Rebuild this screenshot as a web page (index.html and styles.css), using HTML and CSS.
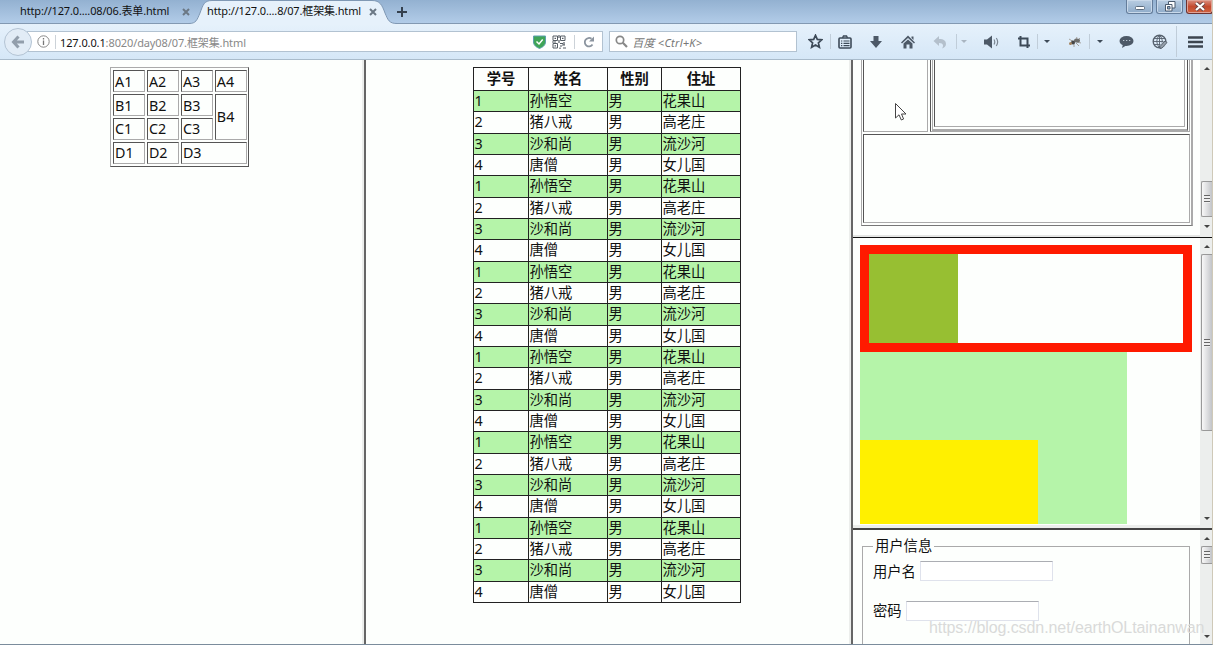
FILE: index.html
```html
<!DOCTYPE html>
<html lang="zh-CN">

<head>
    <meta charset="UTF-8">
    <title>框架集</title>
    <link rel="stylesheet" href="styles.css">
</head>

<body>
    <div class="tabs">
        <svg class="tab-shape" width="215" height="25" viewBox="0 0 215 25">
            <path d="M0 23.5C7 23.5 8 20 11 13C14 5 15 .5 23 .5H183C191 .5 193 5 196 13C199 20 200 23.5 208 23.5V25H0Z" fill="#e6f1fb" stroke="#7f98b4" />
            <path d="M0 24H215V25H0Z" fill="#e6f1fb" />
        </svg>
        <span class="tab first">http://127.0....08/06.表单.html</span>
        <svg class="close" width="8" height="8" viewBox="0 0 8 8"><path d="M1 1L7 7M7 1L1 7" /></svg>
        <span class="tab second">http://127.0....8/07.框架集.html</span>
        <svg class="close" width="8" height="8" viewBox="0 0 8 8"><path d="M1 1L7 7M7 1L1 7" /></svg>
        <svg class="plus" width="10" height="10" viewBox="0 0 10 10"><path d="M5 0V10M0 5H10" stroke="#34404e" stroke-width="2" /></svg>
        <div class="window-buttons">
            <span><svg width="12" height="8" viewBox="0 0 12 8"><rect x="1.5" y="3.5" width="9" height="3" rx="1" fill="#fff" stroke="#5b6b7d" /></svg></span>
            <span><svg width="12" height="11" viewBox="0 0 12 11" fill="#fff" stroke="#4b5b6e"><path d="M4.500.5H11V7H4.500Z" /><path d="M1.500 3.500H8V10H1.500Z" /><path d="M3.500 5.500H6V8H3.500Z" fill="#90a9c5" /></svg></span>
            <span class="exit"><svg width="12" height="10" viewBox="0 0 12 10"><path d="M2 1L10 8M10 1L2 8" stroke="#6c4444" stroke-width="4" /><path d="M2 1L10 8M10 1L2 8" stroke="#fff" stroke-width="2.200" /></svg></span>
        </div>
    </div>

    <div class="toolbar">
        <div class="back"><svg width="14" height="14" viewBox="0 0 14 14" fill="none" stroke="#929eab" stroke-width="3"><path d="M7.500 1.500L2.500 7L7.500 12.500M3 7H13" /></svg></div>
        <div class="url">
            <svg width="13" height="13" viewBox="0 0 13 13"><circle cx="6.500" cy="6.500" r="5.700" fill="none" stroke="#888" /><path d="M6.500 5.500V10M6.500 3V4.400" stroke="#777" stroke-width="1.300" /></svg>
            <i class="bar"></i>
            <span class="address"><b>127.0.0.1</b>:8020/day08/07.框架集.html</span>
            <svg width="13" height="14" viewBox="0 0 13 14"><path d="M.5 1H12.500V7C12.500 10.500 9 12.500 6.500 13.500C4 12.500.5 10.500.5 7Z" fill="#3fa557" stroke="#5e9fae" /><path d="M3.500 6.500L6 9L9.700 4.500" fill="none" stroke="#fff" stroke-width="1.500" /></svg>
            <svg class="qr" width="14" height="14" viewBox="0 0 14 14" fill="none" stroke="#555c64"><path d="M1 1H5.500V5.500H1ZM8.500 1H13V5.500H8.500ZM1 8.500H5.500V13H1Z" /><path d="M2.500 3.300H4M10 3.300H11.500M2.500 10.800H4M7 0V3M7 5V8M0 7H4M8 8.500H11M12 7V10M8 11H10M11 13H14M8 12.500V14M10 10H13" stroke-width="1.200" /></svg>
            <i class="bar"></i>
            <svg class="reload" width="12" height="12" viewBox="0 0 12 12"><path d="M9.500 8.500A4.200 4.200 0 1 1 8.500 2.800" fill="none" stroke="#8b949f" stroke-width="1.800" /><path d="M11 .5V5.500H6Z" fill="#8b949f" /></svg>
        </div>
        <div class="search">
            <svg width="13" height="13" viewBox="0 0 13 13" fill="none" stroke="#888"><circle cx="5" cy="5" r="3.700" stroke-width="1.700" /><path d="M7.800 7.800L12 12" stroke-width="2.200" /></svg>
            <span>百度 &lt;Ctrl+K&gt;</span>
        </div>
        <div class="icons">
            <div><svg width="15" height="15" viewBox="0 0 15 15"><path d="M7.500 1.300L9.300 5.400L13.800 5.800L10.400 8.800L11.400 13.300L7.500 11L3.600 13.300L4.600 8.800L1.200 5.800L5.700 5.400Z" fill="none" stroke="#3d4a58" stroke-width="1.700" /></svg></div>
            <div class="sep"><svg width="14" height="14" viewBox="0 0 14 14" fill="none" stroke="#3d4a58"><rect x="1" y="3" width="12" height="10" rx="1" stroke-width="1.600" /><path d="M4.500 2.800L5.500 1H8.500L9.500 2.800" stroke-width="1.400" /><path d="M3 6H4.300M5.500 6H11.500M3 8.300H4.300M5.500 8.300H11.500M3 10.600H4.300M5.500 10.600H11.500" stroke-width="1.200" /></svg></div>
            <div><svg width="14" height="14" viewBox="0 0 14 14"><path d="M4.500 1H9.500V6H13L7 13L1 6H4.500Z" fill="#4d5967" /></svg></div>
            <div><svg width="14" height="14" viewBox="0 0 14 14"><path d="M7 .5L14 7.500L13 8.500L7 3L1 8.500L0 7.500ZM10.500 1.500H12.500V5L10.500 3ZM2.500 8.500L7 4.500L11.500 8.500V13.500H8.500V9.500H5.500V13.500H2.500Z" fill="#4d5967" /></svg></div>
            <div><svg width="14" height="14" viewBox="0 0 14 14"><path d="M6 1V4C11 4 13 6 13 9C13 11 11.500 13 9 13.500C10.500 11.500 11 8 6 8V11L.5 6Z" fill="#b4c0cc" /></svg></div>
            <div class="sep pale"><i class="caret"></i></div>
            <div><svg width="16" height="14" viewBox="0 0 16 14"><path d="M1 4.500H4L9 .5V13.500L4 9.500H1Z" fill="#4d5967" /><path d="M11 4.500Q12.500 7 11 9.500M13.300 3Q16 7 13.300 11" fill="none" stroke="#7c8793" stroke-width="1.200" /></svg></div>
            <div><svg width="14" height="14" viewBox="0 0 14 14" fill="none" stroke="#3d4a58" stroke-width="2"><path d="M3.500 1V10.500H13M1 3.500H10.500V13" /></svg></div>
            <div class="sep"><i class="caret"></i></div>
            <div class="bug"><svg width="14" height="12" viewBox="0 0 14 12"><path d="M1 3L6 6M9 1L7 5M12 2L9 5M13 7L9 6M11 10L8 7M6 11L6 7M2 9L5 6" stroke="#a5a29e" /><ellipse cx="9" cy="4.500" rx="3" ry="2" fill="#6d6d6b" /><circle cx="5" cy="6.500" r="2" fill="#464646" /><circle cx="2.500" cy="7.500" r="1.500" fill="#a3835e" /></svg></div>
            <div class="sep"><i class="caret"></i></div>
            <div><svg width="15" height="14" viewBox="0 0 15 14"><ellipse cx="7.500" cy="6" rx="7" ry="5" fill="#4d5967" /><path d="M4 9L3 13L8 10Z" fill="#4d5967" /><path d="M4 5.500H5.300M7 5.500H8.300M10 5.500H11.300" stroke="#b9c5d0" stroke-width="1.200" /></svg></div>
            <div><svg width="16" height="16" viewBox="0 0 16 16" fill="none" stroke="#56616d"><circle cx="7.500" cy="7.500" r="6.300" stroke-width="1.400" /><path d="M7.500 1V14M1 7.500H14M2 4.500H13M2 10.500H10M7.500 1Q2 7 7.500 14M7.500 1Q13 7 8 14" stroke-width=".9" /><path d="M14 8L9 13" stroke="#e0edf8" stroke-width="4" /><path d="M13 7L8 12.500V14.500L10 14L15 8.500Z" fill="#98a3ae" /></svg></div>
            <div class="sep menu"><svg width="15" height="12" viewBox="0 0 15 12"><path d="M0 1.500H15M0 6H15M0 10.500H15" stroke="#3d4650" stroke-width="2.400" /></svg></div>
        </div>
    </div>

    <div class="frameset">
        <div class="frame left">
            <div class="grid-table">
                <div>A1</div><div>A2</div><div>A3</div><div>A4</div>
                <div>B1</div><div>B2</div><div>B3</div><div class="rows2">B4</div>
                <div>C1</div><div>C2</div><div>C3</div>
                <div>D1</div><div>D2</div><div class="cols2">D3</div>
            </div>
        </div>

        <div class="frame center">
            <table class="students">
                <thead>
                    <tr><th>学号</th><th>姓名</th><th>性别</th><th>住址</th></tr>
                </thead>
                <tbody id="students"></tbody>
            </table>
        </div>

        <div class="frame right">
            <div class="pane pane1">
                <div class="content">
                    <div class="layout">
                        <div class="top">
                            <div class="cell side"></div>
                            <div class="cell main"><div class="inner"><div class="cell"></div></div></div>
                        </div>
                        <div class="cell footer"></div>
                    </div>
                </div>
                <div class="scroll"><i class="up"></i><div class="thumb thumb1"></div><i class="down"></i></div>
            </div>
            <div class="pane pane2">
                <div class="content">
                    <div class="red-box"><div class="olive"></div></div>
                    <div class="green-box"><div class="yellow"></div></div>
                </div>
                <div class="scroll"><i class="up"></i><div class="thumb thumb2"></div><i class="down"></i></div>
            </div>
            <div class="pane pane3">
                <div class="content">
                    <fieldset>
                        <legend>用户信息</legend>
                        <div class="field"><label>用户名</label><input type="text"></div>
                        <div class="field"><label>密码</label><input type="text"></div>
                    </fieldset>
                </div>
                <div class="scroll"><i class="up"></i><div class="thumb thumb3"></div><i class="down"></i></div>
            </div>
        </div>
    </div>

    <svg class="cursor" width="12" height="18" viewBox="0 0 12 18"><path d="M.5.5V15L4 11.800L6.300 17L8.600 16L6.500 11H11Z" fill="#fff" stroke="#444" /></svg>
    <div class="watermark">https://blog.csdn.net/earthOLtainanwan</div>

    <script>
        const students = [
            [1, '孙悟空', '男', '花果山'],
            [2, '猪八戒', '男', '高老庄'],
            [3, '沙和尚', '男', '流沙河'],
            [4, '唐僧', '男', '女儿国']
        ];
        let rows = '';
        for (let i = 0; i < 6; i++) {
            students.forEach(s => {
                rows += '<tr><td>' + s.join('</td><td>') + '</td></tr>';
            });
        }
        document.getElementById('students').innerHTML = rows;
    </script>
</body>

</html>
```

FILE: styles.css
```css
* {
    box-sizing: border-box;
}

body {
    margin: 0;
    width: 1213px;
    height: 645px;
    overflow: hidden;
    display: flex;
    flex-direction: column;
    position: relative;
    border-right: 1px solid #cfc9b8;
    border-bottom: 1px solid #7b8c9c;
    background: #fdfffd;
    font: 14.3px "Noto Sans", "Noto Sans CJK SC", sans-serif;
    color: #111;
}

svg {
    flex: none;
    display: block;
}

/* 标签栏 */
.tabs {
    flex: none;
    height: 24px;
    display: flex;
    align-items: center;
    position: relative;
    background: linear-gradient(#93b1d1, #b2cce8);
    border-bottom: 1px solid #8399b2;
    font-size: 11px;
    letter-spacing: -0.15px;
    line-height: 14px;
    white-space: nowrap;
}

.tab-shape {
    position: absolute;
    left: 189px;
    top: 0;
}

.tab {
    position: relative;
    flex: none;
    padding-bottom: 2px;
}

.first {
    margin-left: 20px;
    width: 162px;
}

.second {
    margin-left: 17px;
    width: 162px;
}

.close {
    position: relative;
    stroke: #6b7885;
    stroke-width: 2;
}

.plus {
    margin-left: 20px;
}

.window-buttons {
    margin-left: auto;
    align-self: flex-start;
    display: flex;
    gap: 3px;
    margin-right: -1px;
}

.window-buttons span {
    width: 27px;
    height: 14px;
    display: flex;
    justify-content: center;
    align-items: center;
    border: 1px solid #647d9b;
    border-top: 0;
    border-radius: 0 0 3px 3px;
    background: linear-gradient(#b9cde2, #8eabc9);
    box-shadow: inset 0 0 0 1px #c9d9ea;
}

.window-buttons .exit {
    background: linear-gradient(#d99082, #c44a2f 50%, #d0633f);
    border-color: #6d3230;
    box-shadow: inset 0 0 0 1px #e0a295;
}

/* 工具栏 */
.toolbar {
    flex: none;
    height: 36px;
    display: flex;
    align-items: center;
    border-bottom: 1px solid #a9bbcb;
    background: linear-gradient(#e6f1fb, #d5e7f7);
}

.back {
    flex: none;
    z-index: 1;
    width: 28px;
    height: 28px;
    margin-left: 4px;
    display: flex;
    align-items: center;
    justify-content: center;
    border: 1px solid #b4c4d4;
    border-radius: 50%;
    background: #e2ecf6;
}

.url,
.search {
    height: 21px;
    display: flex;
    align-items: center;
    border: 1px solid #b2c2d1;
    background: #fff;
    font-size: 11px;
    white-space: nowrap;
}

.url {
    width: 577px;
    margin-left: -5px;
    padding-left: 9px;
    letter-spacing: -0.11px;
}

.bar {
    width: 1px;
    height: 14px;
    margin-left: 5px;
    background: #ccd2d8;
}

.address {
    width: 473px;
    margin-left: 4px;
    color: #888;
}

.address b {
    font-weight: normal;
    color: #111;
}

.qr {
    margin: 0 3px 0 6px;
}

.reload {
    margin-left: 8px;
}

.search {
    width: 188px;
    margin-left: 6px;
    padding-left: 5px;
    gap: 4px;
    font-style: italic;
    font-size: 11px;
    color: #777;
}

.search span {
    letter-spacing: 0.25px;
}

.icons {
    display: grid;
    grid-template-columns: 30px 29px 33px 32px 32px 15px 40px 26px 19px 33px 21px 33px 33px 36px;
    margin-left: 3px;
    height: 35px;
}

.icons div {
    display: flex;
    align-items: center;
    justify-content: center;
}

.icons .sep {
    background: linear-gradient(#c0cdd9, #c0cdd9) left center / 1px 15px no-repeat;
}

.icons .menu {
    background-size: 1px 31px;
    padding-left: 2px;
}

.icons .bug {
    padding-left: 5px;
}

.caret {
    border: 3px solid transparent;
    border-top-color: #3d4a58;
    border-bottom: 0;
}

.pale .caret {
    border-top-color: #a9b5c1;
}

/* 框架 */
.frameset {
    flex: 1;
    min-height: 0;
    display: grid;
    grid-template-columns: 366px 487px 1fr;
}

.frame {
    min-width: 0;
    min-height: 0;
}

.left,
.center {
    border-right: 2px solid #666;
    box-shadow: inset -2px 0 #eceeec;
    padding-top: 7px;
}

.grid-table {
    width: 139px;
    height: 100px;
    margin-left: 110px;
    padding: 2px 1px 2px 2px;
    display: grid;
    grid-template: repeat(4, 1fr) / repeat(4, 1fr);
    gap: 1.8px;
    border: 1px solid;
    border-color: #aaa #555 #555 #aaa;
}

.grid-table div {
    display: flex;
    align-items: center;
    padding: 1px 0 0 1px;
    border: 1px solid;
    border-color: #555 #aaa #aaa #555;
    line-height: 18px;
}

.grid-table .rows2 {
    grid-row: span 2;
}

.grid-table .cols2 {
    grid-column: span 2;
}

.students,
.students thead,
.students tbody {
    display: block;
}

.students {
    width: 268px;
    margin-left: 107px;
    border: solid #222;
    border-width: 1px 0 0 1px;
}

.students tr {
    display: grid;
    grid-template-columns: 55px 79px 54px 79px;
    height: 21.333px;
}

.students thead tr {
    height: 23px;
}

.students th,
.students td {
    border: solid #222;
    border-width: 0 1px 1px 0;
}

.students th {
    padding: 0;
    line-height: 21px;
}

.students td {
    padding: 0 0 0 0.5px;
    line-height: 20px;
}

.students tbody tr:nth-child(odd) {
    background: #b5f4a9;
}

.right {
    display: flex;
    flex-direction: column;
}

.pane {
    display: flex;
    flex: none;
    overflow: hidden;
}

.pane .content {
    flex: 1;
    min-width: 0;
    padding-left: 7px;
}

.pane1 {
    height: 178px;
    border-bottom: 1px solid #111;
    box-shadow: inset 0 -2px #e4e6e4;
}

.pane2 {
    height: 292px;
    border-bottom: 2px solid #444;
    box-shadow: inset 0 -3px #eceeec;
}

.pane3 {
    height: 114px;
}

.cell {
    border: 1px solid;
    border-color: #555 #aaa #aaa #555;
}

.layout {
    width: 332px;
    height: 166px;
    margin-left: 1px;
    display: flex;
    flex-direction: column;
    gap: 2px;
    padding: 0 1px 2px;
    border: solid #aaa;
    border-width: 0 2px 1px 1px;
    border-bottom-color: #777;
}

.top {
    height: 72px;
    display: flex;
    gap: 2px;
}

.top .cell {
    border-top: 0;
}

.side {
    width: 65px;
}

.main {
    flex: 1;
    padding: 0 1px;
}

.inner {
    height: 71px;
    padding: 0 2px 2px 1px;
    border: solid #aaa;
    border-width: 0 1px 2px 1px;
    border-right-color: #555;
}

.inner .cell {
    height: 67px;
}

.footer {
    flex: 1;
}

.red-box {
    width: 332px;
    height: 107px;
    margin-top: 7px;
    border: 9px solid #ff1a00;
}

.olive {
    width: 89px;
    height: 89px;
    background: #97bf32;
}

.green-box {
    width: 267px;
    height: 172px;
    padding-top: 88px;
    background: #b5f4a9;
}

.yellow {
    width: 178px;
    height: 84px;
    background: #fff000;
}

fieldset {
    width: 328px;
    height: 150px;
    margin: 6px 0 0 2px;
    padding: 4px 0 0 10px;
    border: 1px solid #aaa;
}

legend {
    padding: 0 2px;
    line-height: 20px;
}

.field {
    display: flex;
    align-items: center;
    height: 20px;
    margin-bottom: 19.5px;
}

.field input {
    width: 133px;
    height: 20px;
    margin: 2px 0 0 4px;
    border: 1px solid #dfe2ec;
    border-top-color: #abadb3;
    background: #fff;
}

.scroll {
    width: 12px;
    flex: none;
    display: flex;
    flex-direction: column;
    align-items: center;
    background: #eceeed;
}

.scroll i {
    margin: 7px 0 0 2px;
    border: 3px solid transparent;
}

.scroll .up {
    border-top: 0;
    border-bottom-color: #444;
}

.scroll .down {
    margin: auto 0 8px 2px;
    border-bottom: 0;
    border-top-color: #444;
}

.pane1 .down {
    margin-bottom: 9px;
}

.pane3 .down {
    margin-bottom: 6px;
}

.thumb {
    flex: none;
    width: 11px;
    margin-left: 1px;
    border: 1px solid #999;
    border-right: 0;
    border-radius: 2px 0 0 2px;
    background: linear-gradient(90deg, #f8f8f8, #d9dadc 60%, #c2c4c8);
    display: flex;
    align-items: center;
    justify-content: center;
}

.thumb::after {
    content: "";
    width: 6px;
    height: 8px;
    background: repeating-linear-gradient(#666 0 1px, #eee 1px 3px);
}

.thumb1 {
    height: 36px;
    margin-top: 111px;
}

.thumb2 {
    height: 177px;
    margin-top: 6px;
}

.thumb3 {
    height: 18px;
    margin-top: 6px;
}

.cursor {
    position: absolute;
    left: 895px;
    top: 103px;
}

.watermark {
    position: absolute;
    left: 929px;
    top: 618px;
    font: 16px/20px "Liberation Sans", sans-serif;
    letter-spacing: -0.08px;
    color: #d9dad9;
}
```
